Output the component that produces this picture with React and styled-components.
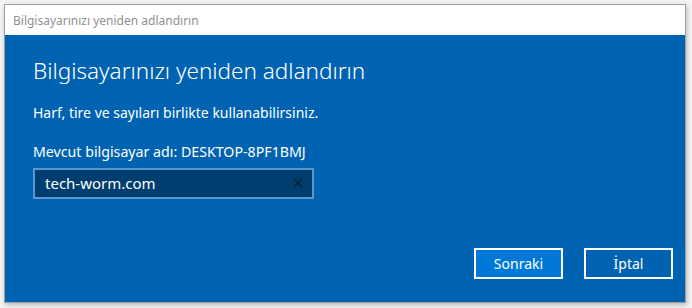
import React from "react";
import styled, { createGlobalStyle } from "styled-components";

const Global = createGlobalStyle`
  html, body {
    margin: 0;
    background: #f4f4f4;
  }
  body {
    font-family: "Noto Sans", "Open Sans", sans-serif;
  }
`;

const Page = styled.div`
  width: 692px;
  height: 308px;
  padding: 4px 0 0 4px;
  box-sizing: border-box;
`;

const Window = styled.div`
  width: 682px;
  height: 299px;
  box-sizing: border-box;
  border: 1px solid #a0a0a0;
  box-shadow: 1px 2px 5px rgba(0, 0, 0, 0.25);
  display: flex;
  flex-direction: column;
  background: #0063b1;
`;

const TitleBar = styled.div`
  height: 30px;
  background: #fff;
  display: flex;
  align-items: center;
  padding-left: 8px;
  color: #8f8f8f;
  font-size: 12px;
  flex-shrink: 0;
`;

const Body = styled.div`
  flex: 1;
  display: flex;
  flex-direction: column;
  padding: 22px 12px 0 28px;
  color: #fff;
`;

const Heading = styled.h1`
  margin: 0;
  font-size: 22.5px;
  font-weight: 300;
  line-height: 28px;
`;

const Text = styled.p`
  margin: ${(p) => p.$top}px 0 0;
  font-size: ${(p) => p.$size || 14}px;
  line-height: 20px;
`;

const InputBox = styled.div`
  margin-top: 6px;
  width: 281px;
  height: 31px;
  box-sizing: border-box;
  border: 2px solid #5b97cf;
  background: #003e6f;
  display: flex;
  align-items: center;
  padding: 0 9px 2px 10px;
`;

const Value = styled.span`
  flex: 1;
  font-size: 15px;
  color: #fff;
`;

const Actions = styled.div`
  margin-top: auto;
  margin-bottom: 23px;
  display: flex;
  justify-content: flex-end;
  gap: 21px;
`;

const Button = styled.button`
  width: 89px;
  height: 31px;
  box-sizing: border-box;
  border: 2px solid #fff;
  background: ${(p) => (p.$primary ? "#0078d7" : "transparent")};
  color: #fff;
  font-family: inherit;
  font-size: 14px;
  padding: 0 0 1px;
`;

export default function App() {
  return (
    <Page>
      <Global />
      <Window>
        <TitleBar>Bilgisayarınızı yeniden adlandırın</TitleBar>
        <Body>
          <Heading>Bilgisayarınızı yeniden adlandırın</Heading>
          <Text $top={18}>Harf, tire ve sayıları birlikte kullanabilirsiniz.</Text>
          <Text $top={19} $size={14.2}>Mevcut bilgisayar adı: DESKTOP-8PF1BMJ</Text>
          <InputBox>
            <Value>tech-worm.com</Value>
            <svg width="10" height="10" viewBox="0 0 10 10">
              <path d="M1 1L9 9M9 1L1 9" stroke="#0b1d2e" strokeWidth="1.3" />
            </svg>
          </InputBox>
          <Actions>
            <Button $primary>Sonraki</Button>
            <Button>İptal</Button>
          </Actions>
        </Body>
      </Window>
    </Page>
  );
}
